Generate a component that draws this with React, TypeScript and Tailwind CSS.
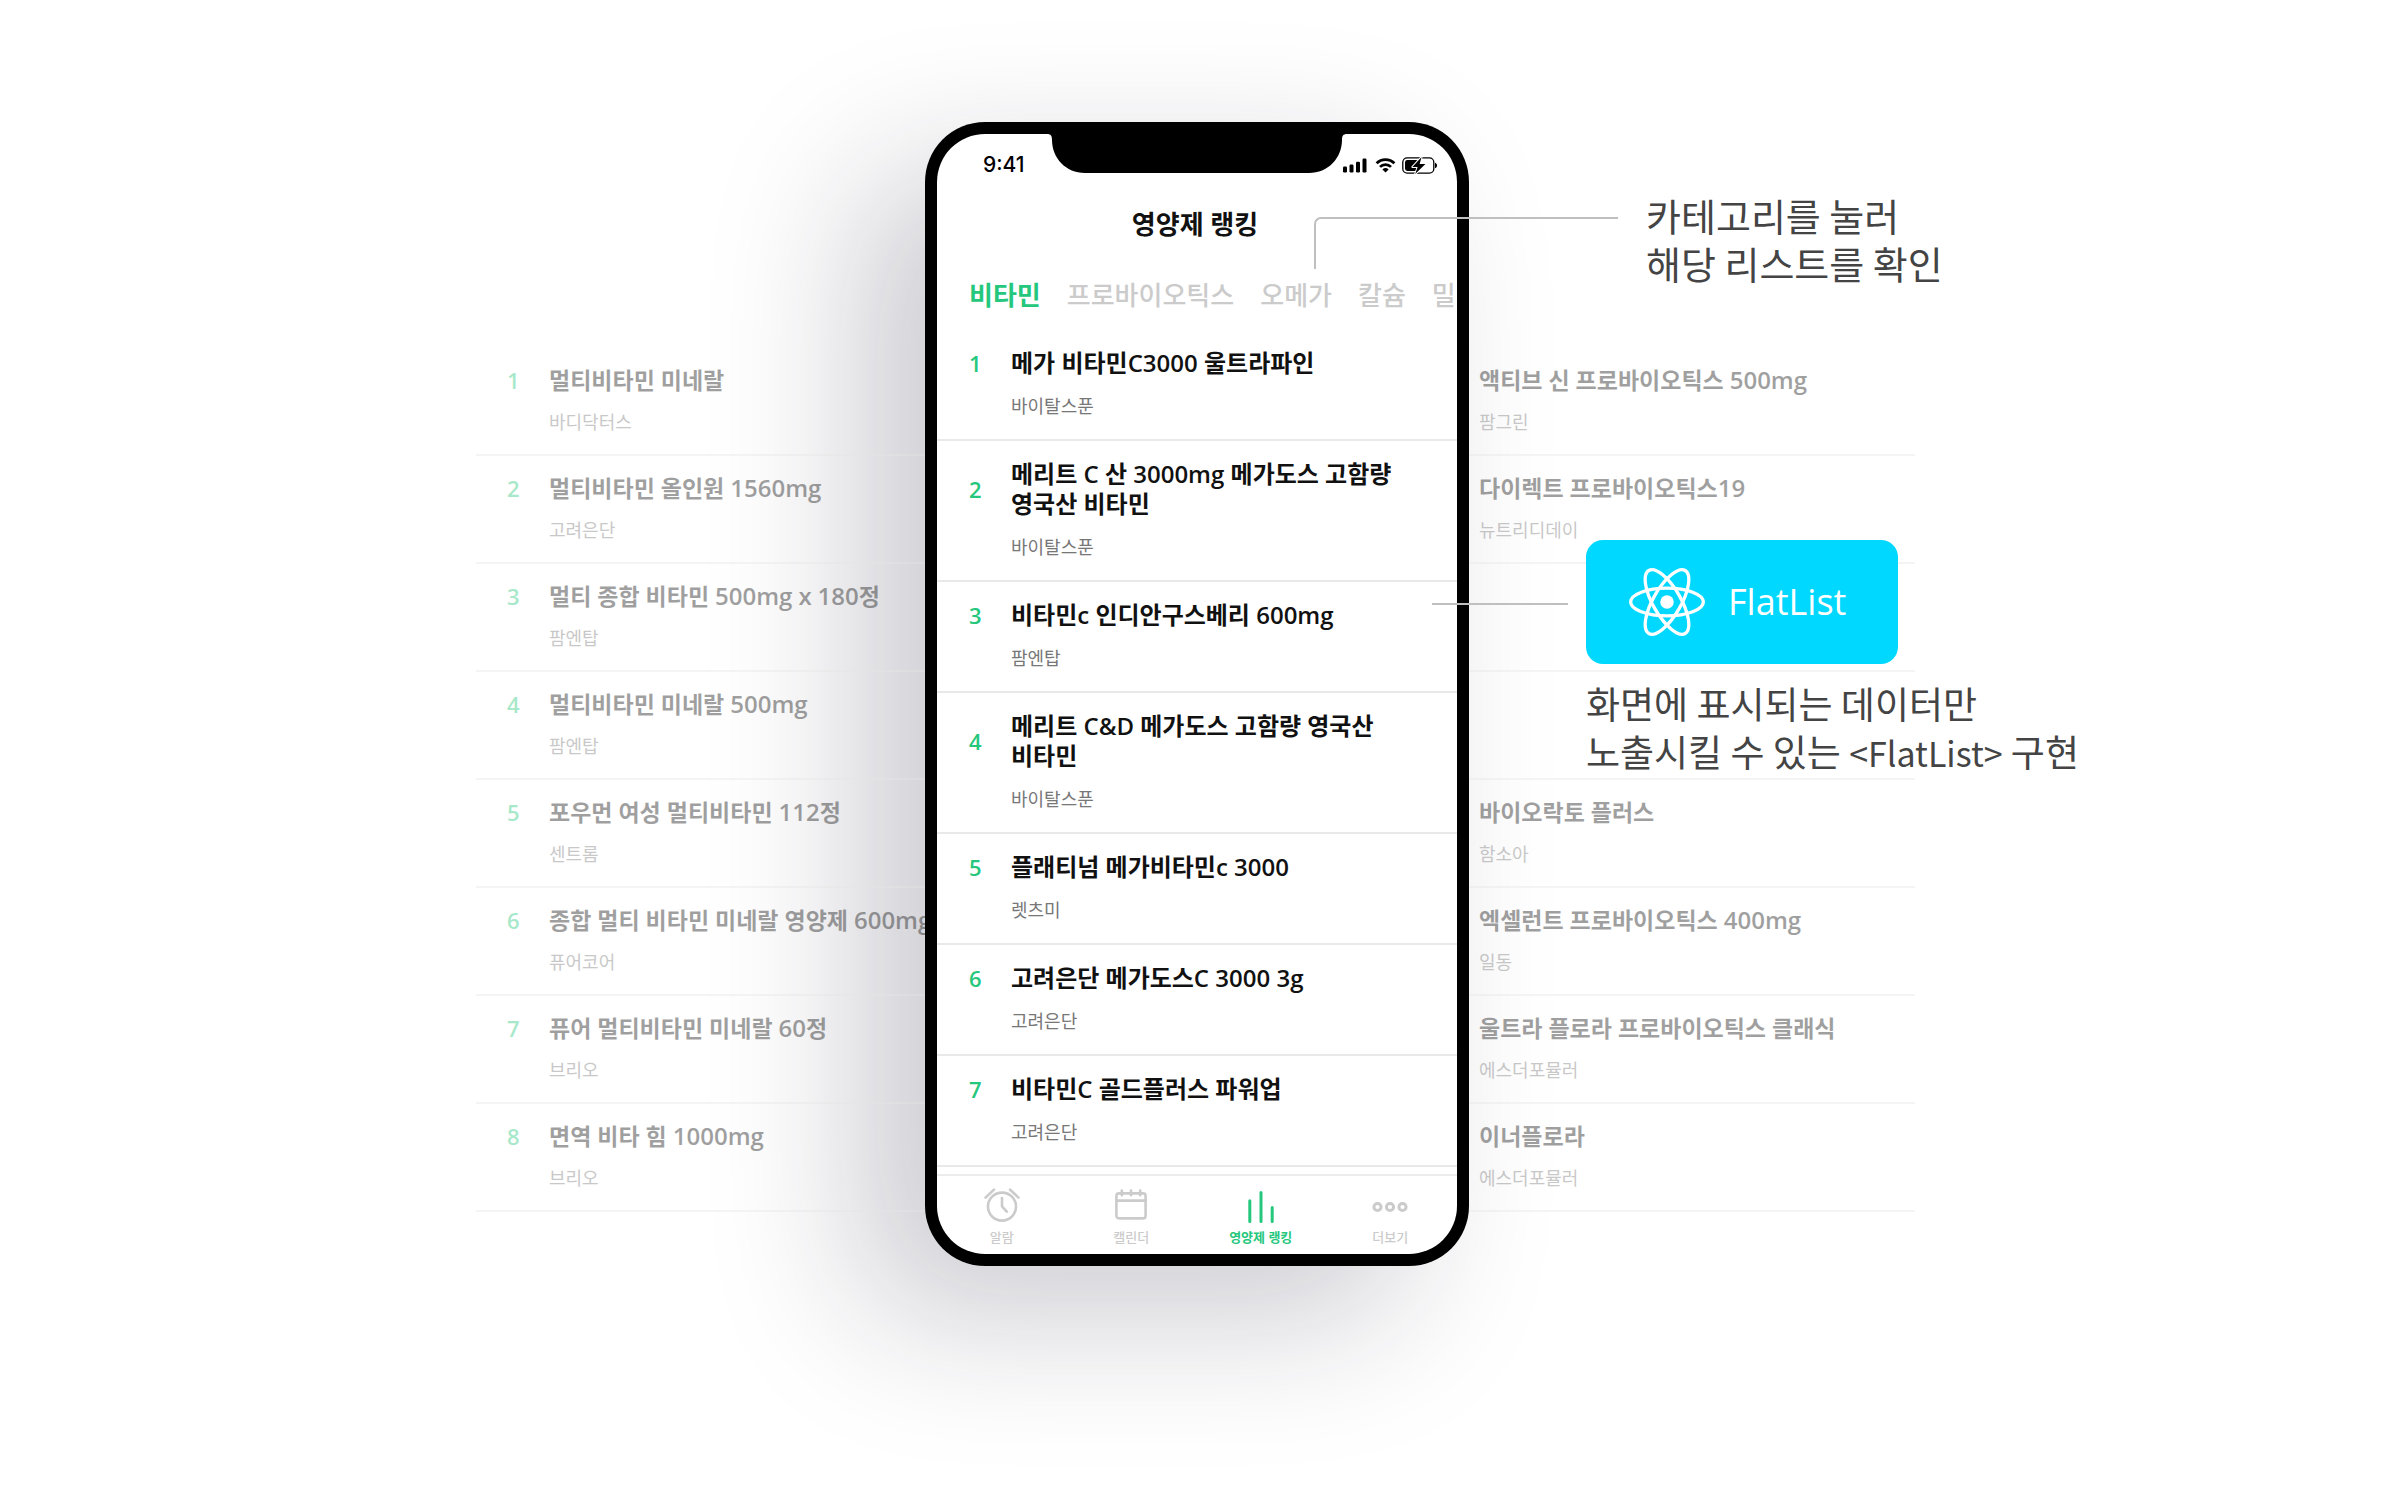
import { Fragment, type ReactNode } from "react";

type Item = { name: string; maker: string };

const vitamins: Item[] = [
  { name: "메가 비타민C3000 울트라파인", maker: "바이탈스푼" },
  { name: "메리트 C 산 3000mg 메가도스 고함량 영국산 비타민", maker: "바이탈스푼" },
  { name: "비타민c 인디안구스베리 600mg", maker: "팜엔탑" },
  { name: "메리트 C&D 메가도스 고함량 영국산 비타민", maker: "바이탈스푼" },
  { name: "플래티넘 메가비타민c 3000", maker: "렛츠미" },
  { name: "고려은단 메가도스C 3000 3g", maker: "고려은단" },
  { name: "비타민C 골드플러스 파워업", maker: "고려은단" },
];

const multivitamins: Item[] = [
  { name: "멀티비타민 미네랄", maker: "바디닥터스" },
  { name: "멀티비타민 올인원 1560mg", maker: "고려은단" },
  { name: "멀티 종합 비타민 500mg x 180정", maker: "팜엔탑" },
  { name: "멀티비타민 미네랄 500mg", maker: "팜엔탑" },
  { name: "포우먼 여성 멀티비타민 112정", maker: "센트롬" },
  { name: "종합 멀티 비타민 미네랄 영양제 600mg", maker: "퓨어코어" },
  { name: "퓨어 멀티비타민 미네랄 60정", maker: "브리오" },
  { name: "면역 비타 힘 1000mg", maker: "브리오" },
];

const probiotics: (Item | null)[] = [
  { name: "액티브 신 프로바이오틱스 500mg", maker: "팜그린" },
  { name: "다이렉트 프로바이오틱스19", maker: "뉴트리디데이" },
  null,
  null,
  { name: "바이오락토 플러스", maker: "함소아" },
  { name: "엑셀런트 프로바이오틱스 400mg", maker: "일동" },
  { name: "울트라 플로라 프로바이오틱스 클래식", maker: "에스더포뮬러" },
  { name: "이너플로라", maker: "에스더포뮬러" },
];

const categories = ["비타민", "프로바이오틱스", "오메가", "칼슘", "밀"];

/* Latin letters and digits run slightly larger than the Hangul around them. */
function Mixed({ text }: { text: string }) {
  return (
    <>
      {text.split(/([A-Za-z0-9&]+)/).map((part, i) =>
        i % 2 ? (
          <span key={i} className="text-[24px] leading-none">
            {part}
          </span>
        ) : (
          <Fragment key={i}>{part}</Fragment>
        ),
      )}
    </>
  );
}

function GhostRow({ rank, item }: { rank?: number; item: Item | null }) {
  return (
    <li className={rank ? "h-[108px] border-b-2 border-[#e6e6e6] pt-[17px] pl-[31px] whitespace-nowrap" : "h-[108px] border-b-2 border-[#e6e6e6] pt-[17px] pl-2.5 whitespace-nowrap"}>
      {item && (
        <>
          <div className="flex items-center">
            {rank && <span className="w-[42px] shrink-0 text-[22px] leading-[30px] font-semibold text-[#25c77c]">{rank}</span>}
            <h3 className="text-[23px] leading-[30px] font-semibold text-[#111]">
              <Mixed text={item.name} />
            </h3>
          </div>
          <p className={rank ? "mt-[15px] pl-[42px] text-[18px] leading-6 text-[#777]" : "mt-[15px] text-[18px] leading-6 text-[#777]"}>
            {item.maker}
          </p>
        </>
      )}
    </li>
  );
}

function Notch() {
  return (
    <svg className="absolute top-0 left-1/2 -translate-x-1/2" width="300" height="39" viewBox="0 0 300 39" aria-hidden="true">
      <path d="M0 0C4 0 5 2 5 6C5 24 19 39 38 39H262C281 39 295 24 295 6C295 2 296 0 300 0Z" fill="#000" />
    </svg>
  );
}

function StatusIcons() {
  return (
    <svg width="94" height="17" viewBox="0 0 94 17" aria-hidden="true">
      <g fill="#000">
        <rect x="0" y="9.5" width="4" height="6" rx="1.2" />
        <rect x="6.5" y="7.5" width="4" height="8" rx="1.2" />
        <rect x="13" y="4.8" width="4" height="10.7" rx="1.2" />
        <rect x="19.5" y="1.5" width="4" height="14" rx="1.2" />
      </g>
      <g fill="none" stroke="#000" strokeWidth="2.7">
        <path d="M33.6 6.3A12.4 12.4 0 0 1 51.4 6.3" />
        <path d="M37 9.9A7.6 7.6 0 0 1 48 9.9" />
      </g>
      <path d="M42.5 15.6L39.4 12.4A4.5 4.5 0 0 1 45.6 12.4Z" fill="#000" />
      <rect x="59.8" y="0.8" width="31" height="15.4" rx="4.4" fill="none" stroke="#000" strokeWidth="1.3" />
      <rect x="62" y="3" width="13.5" height="11" rx="2.4" fill="#000" />
      <path d="M92 5.8C93.6 6.4 94 7.5 94 8.5S93.6 10.6 92 11.2Z" fill="#000" />
      <path d="M78.6 0L69.4 10H74.6L72.2 17L82.4 7H76.6Z" fill="#000" stroke="#fff" strokeWidth="2" strokeLinejoin="round" paintOrder="stroke" />
    </svg>
  );
}

function NavIcon({ children }: { children: ReactNode }) {
  return (
    <svg
      width="36"
      height="36"
      viewBox="0 0 36 36"
      fill="none"
      stroke="currentColor"
      strokeWidth="2.6"
      strokeLinecap="round"
      strokeLinejoin="round"
      aria-hidden="true"
    >
      {children}
    </svg>
  );
}

const navItems: { label: string; icon: ReactNode }[] = [
  {
    label: "알람",
    icon: (
      <NavIcon>
        <circle cx="18" cy="18.6" r="14" />
        <path d="M18 10V18.4L22.8 23.6M1.5 9.6L10 1.6M34.5 9.6L26 1.6" />
      </NavIcon>
    ),
  },
  {
    label: "캘린더",
    icon: (
      <NavIcon>
        <rect x="3.4" y="5.4" width="29.2" height="25" rx="2.6" />
        <path d="M3.4 12.6H32.6M8.8 2.6V7.2M18 2.6V7.2M27.2 2.6V7.2" />
      </NavIcon>
    ),
  },
  {
    label: "영양제 랭킹",
    icon: (
      <NavIcon>
        <path d="M6.8 12.8V33.4M18 4.4V33.4M29.2 19.6V33.4" strokeWidth="3" />
      </NavIcon>
    ),
  },
  {
    label: "더보기",
    icon: (
      <NavIcon>
        <g strokeWidth="3">
          <circle cx="5.5" cy="19" r="3.6" />
          <circle cx="18" cy="19" r="3.6" />
          <circle cx="30.5" cy="19" r="3.6" />
        </g>
      </NavIcon>
    ),
  },
];

function Phone() {
  return (
    <div className="relative w-[544px] shrink-0">
      <div className="absolute inset-0 -z-10 rounded-[60px] shadow-[-66px_50px_150px_0_rgba(22,22,50,0.22)]" />
      <div className="relative z-10 rounded-[60px] bg-black p-3">
        <div className="relative overflow-hidden rounded-[48px] bg-white">
          <Notch />
          <div className="flex h-[62px] items-center justify-between pr-5 pl-[46px]">
            <span className="font-[Inter,sans-serif] text-[21px] font-medium text-black">9:41</span>
            <StatusIcons />
          </div>
          <h1 className="pr-1 text-center text-[26px] leading-[56px] font-semibold text-[#111]">영양제 랭킹</h1>
          <div role="tablist" className="flex h-[78px] gap-[26px] overflow-hidden pt-[23px] pl-8 text-[26px] leading-10 font-medium whitespace-nowrap text-[#cbcbcb]">
            {categories.map((c, i) => (
              <button key={c} type="button" role="tab" aria-selected={i === 0} className={i === 0 ? "shrink-0 self-start font-semibold text-[#25c77c]" : "shrink-0 self-start"}>
                {c}
              </button>
            ))}
          </div>
          <ol>
            {vitamins.map((v, i) => (
              <li key={v.name} className="border-b-2 border-[#e9e9e9] pt-[18px] pr-12 pb-[21px] pl-8">
                <div className="flex items-center">
                  <span className="w-[42px] shrink-0 text-[22px] leading-[30px] font-semibold text-[#25c77c]">{i + 1}</span>
                  <h2 className="text-[24px] leading-[30px] font-semibold break-keep text-[#111]">{v.name}</h2>
                </div>
                <p className="mt-4 pl-[42px] text-[18px] leading-6 text-[#777]">{v.maker}</p>
              </li>
            ))}
          </ol>
          <nav className="mt-[7px] grid h-20 grid-cols-4 border-t-2 border-[#ececec] pt-3 pr-0.5">
            {navItems.map((n, i) => (
              <button
                key={n.label}
                type="button"
                className={i === 2 ? "flex flex-col items-center gap-[3px] font-semibold text-[#25c77c]" : "flex flex-col items-center gap-[3px] font-medium text-[#cbcbcb]"}
              >
                {n.icon}
                <span className="text-[13px] leading-5">{n.label}</span>
              </button>
            ))}
          </nav>
        </div>
      </div>
    </div>
  );
}

function ReactLogo() {
  return (
    <svg width="76" height="68" viewBox="-11.5 -10.232 23 20.463" aria-hidden="true">
      <circle r="2.05" fill="#fff" />
      <g fill="none" stroke="#fff">
        <ellipse rx="11" ry="4.2" />
        <ellipse rx="11" ry="4.2" transform="rotate(60)" />
        <ellipse rx="11" ry="4.2" transform="rotate(120)" />
      </g>
    </svg>
  );
}

export default function App() {
  return (
    <main className="isolate flex min-h-screen items-start justify-center overflow-hidden bg-white pt-[122px] pr-[9px] font-['Open_Sans','Noto_Sans_CJK_KR',sans-serif]">
      <section className="w-[449px] shrink-0 pt-[226px] opacity-40">
        <ol>
          {multivitamins.map((m, i) => (
            <GhostRow key={m.name} rank={i + 1} item={m} />
          ))}
        </ol>
      </section>

      <Phone />

      <section className="relative w-[446px] shrink-0">
        <div className="h-[226px] w-max pt-[69px] pl-[177px]">
          <p className="font-['Noto_Sans_CJK_KR',sans-serif] text-[38px] leading-[48px] whitespace-nowrap text-[#444]">
            카테고리를 눌러
            <br />
            해당 리스트를 확인
          </p>
        </div>
        <ul className="opacity-40">
          {probiotics.map((p, i) => (
            <GhostRow key={i} item={p} />
          ))}
        </ul>

        <div className="absolute top-[95px] left-[-155px] z-20 h-[52px] w-[304px] rounded-tl-[7px] border-t-2 border-l-2 border-[#bfbfbf]" />
        <div className="absolute top-[481px] left-[-37px] z-20 h-0.5 w-[136px] bg-[#bfbfbf]" />

        <div className="absolute top-[418px] left-[117px] z-20">
          <div className="flex h-[124px] w-[312px] items-center gap-[23px] rounded-[17px] bg-[#00d8ff] pl-[43px]">
            <ReactLogo />
            <span className="text-[36px] leading-none text-white">FlatList</span>
          </div>
          <p className="mt-[15px] font-['Noto_Sans_CJK_KR',sans-serif] text-[37px] leading-[48px] whitespace-nowrap text-[#444]">
            화면에 표시되는 데이터만
            <br />
            노출시킬 수 있는 <span className="text-[34px] leading-none">&lt;FlatList&gt;</span> 구현
          </p>
        </div>
      </section>
    </main>
  );
}
